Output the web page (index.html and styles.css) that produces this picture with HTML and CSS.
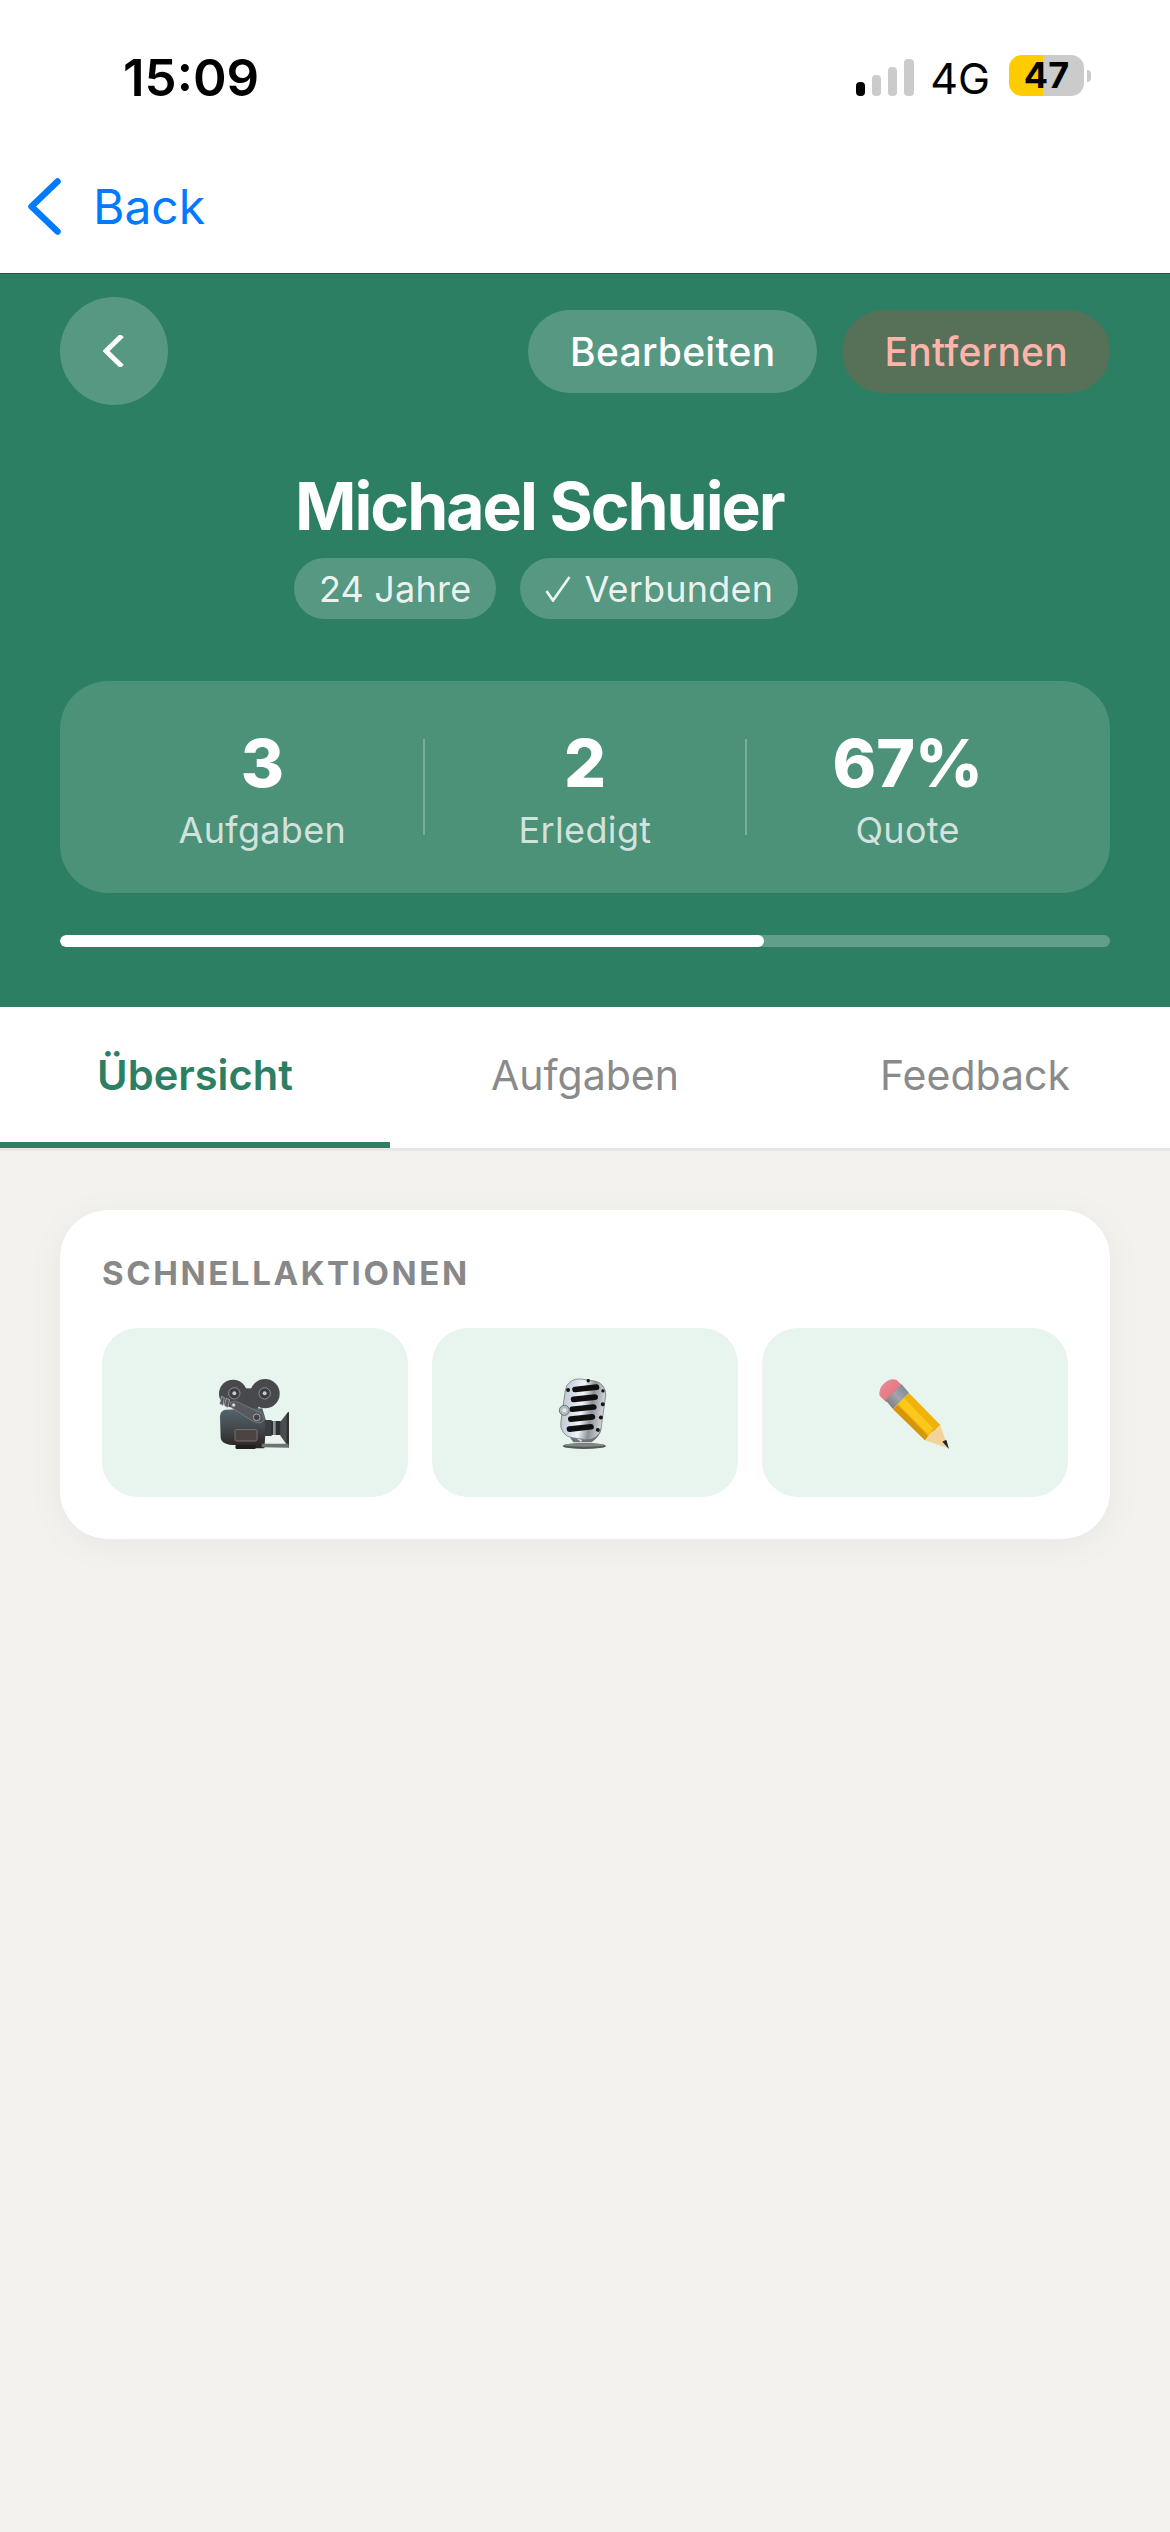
FILE: index.html
```html
<!DOCTYPE html>
<html lang="de">
<head>
<meta charset="utf-8">
<title>Michael Schuier</title>
<link rel="stylesheet" href="styles.css">
</head>
<body>
<div class="app">
  <header class="topbar">
    <div class="status">
      <span class="time">15:09</span>
      <div class="status-right">
        <div class="signal"><i class="bar b1 on"></i><i class="bar b2"></i><i class="bar b3"></i><i class="bar b4"></i></div>
        <span class="net">4G</span>
        <div class="battery"><span class="batt-body">47</span><i class="batt-nub"></i></div>
      </div>
    </div>
    <div class="nav">
      <svg class="nav-chev" width="33" height="57" viewBox="0 0 33 57"><path d="M29.5 3.5 3.5 28.5 29.5 53.5" fill="none" stroke="#007aff" stroke-width="6.5" stroke-linecap="round" stroke-linejoin="round"/></svg>
      <span class="nav-back">Back</span>
    </div>
  </header>

  <section class="hero">
    <div class="hero-top">
      <div class="round-btn"><svg width="21" height="32" viewBox="0 0 21 32"><path d="M19 0.5 3 16 19 31.5" fill="none" stroke="#fff" stroke-width="5"/></svg></div>
      <div class="hero-actions">
        <span class="action">Bearbeiten</span>
        <span class="action danger">Entfernen</span>
      </div>
    </div>
    <div class="person">
      <h1 class="name">Michael Schuier</h1>
      <div class="tags">
        <span class="tag tag-age">24 Jahre</span>
        <span class="tag tag-conn"><svg class="tag-check" width="26" height="26" viewBox="0 0 26 26"><path d="M1.5 15 8 24.5 24.5 1" fill="none" stroke="#eef5f2" stroke-width="2.6"/></svg>Verbunden</span>
      </div>
    </div>
    <div class="stats">
      <div class="stat"><div class="stat-num">3</div><div class="stat-label">Aufgaben</div></div>
      <i class="stat-sep"></i>
      <div class="stat"><div class="stat-num">2</div><div class="stat-label">Erledigt</div></div>
      <i class="stat-sep"></i>
      <div class="stat"><div class="stat-num">67%</div><div class="stat-label">Quote</div></div>
    </div>
    <div class="progress"><div class="progress-fill" style="width:67%"></div></div>
  </section>

  <nav class="tabs">
    <span class="tab active">Übersicht</span>
    <span class="tab">Aufgaben</span>
    <span class="tab">Feedback</span>
  </nav>

  <main class="content">
    <section class="card">
      <h2 class="card-title">SCHNELLAKTIONEN</h2>
      <div class="quick">
        <div class="tile">
          <svg width="100" height="95" viewBox="0 0 300 285">
            <defs>
              <linearGradient id="camBody" x1="0" y1="0" x2="0" y2="1"><stop offset="0" stop-color="#56666e"/><stop offset=".5" stop-color="#43484c"/><stop offset="1" stop-color="#2c2120"/></linearGradient>
            </defs>
            <circle cx="84" cy="86" r="42" fill="#47494c"/>
            <circle cx="180" cy="86" r="44" fill="#47494c"/>
            <rect x="100" y="70" width="60" height="62" fill="#47494c"/>
            <circle cx="88" cy="85" r="17" fill="#3b3d40" stroke="#8d9094" stroke-width="3"/>
            <circle cx="88" cy="85" r="6" fill="#c7c9cb"/>
            <circle cx="179" cy="85" r="17" fill="#3b3d40" stroke="#8d9094" stroke-width="3"/>
            <circle cx="179" cy="85" r="6" fill="#c7c9cb"/>
            <path d="M92 250 178 250 184 170 172 130 60 134Q45 138 45 155L47 218Q50 240 92 240Z" fill="url(#camBody)"/>
            <rect x="90" y="194" width="66" height="34" rx="4" fill="#4a4342" stroke="#77726f" stroke-width="3"/>
            <path d="M50 94 58 98 54 122 44 116ZM64 100 74 104 68 128 58 122Z" fill="#55585b" stroke="#c3c5c7" stroke-width="2"/>
            <path d="M76 112 92 108 172 146 178 162Q172 178 152 172L138 165 80 128Z" fill="#565a5e" stroke="#84888b" stroke-width="2"/>
            <circle cx="86" cy="120" r="5" fill="#d3d5d6"/>
            <circle cx="155" cy="157" r="10" fill="#3f4245" stroke="#b9bbbd" stroke-width="2.5"/>
            <rect x="180" y="165" width="20" height="48" fill="#3a3c3f"/>
            <rect x="198" y="168" width="30" height="42" rx="3" fill="#2f3134"/>
            <rect x="204" y="168" width="8" height="42" fill="#8f9397"/>
            <path d="M226 170 250 140 252 248 226 212Z" fill="#4b4e51"/>
            <path d="M245 146 252 140 252 248 245 240Z" fill="#2f3033"/>
            <path d="M170 236 250 236 252 248 170 247Z" fill="#6f7172"/>
            <rect x="92" y="240" width="60" height="12" rx="3" fill="#231c1c"/>
          </svg>
        </div>
        <div class="tile">
          <svg width="100" height="95" viewBox="0 0 300 285">
            <defs>
              <linearGradient id="micMetal" x1="0" y1="0" x2="1" y2="0"><stop offset="0" stop-color="#c4cad1"/><stop offset=".2" stop-color="#d2dce8"/><stop offset=".45" stop-color="#f3f5f8"/><stop offset=".7" stop-color="#8d939a"/><stop offset="1" stop-color="#d3d6da"/></linearGradient>
            </defs>
            <ellipse cx="148" cy="243" rx="65" ry="9" fill="#55585b"/>
            <ellipse cx="148" cy="240" rx="60" ry="5" fill="#84878a"/>
            <path d="M108 170Q92 205 115 232L170 232Q196 214 200 190L170 205 150 226 128 210 120 170Z" fill="#6f7377"/>
            <path d="M116 196Q120 218 140 228" fill="none" stroke="#d8dbde" stroke-width="6"/>
            <g transform="rotate(8 145 130)">
              <rect x="84" y="44" width="122" height="178" rx="40" fill="url(#micMetal)" stroke="#6a6d71" stroke-width="2"/>
              <rect x="103" y="61" width="82" height="17" rx="8.5" fill="#0f0f0f" transform="rotate(-14 144 70)"/>
              <rect x="103" y="91" width="82" height="17" rx="8.5" fill="#0f0f0f" transform="rotate(-14 144 100)"/>
              <rect x="103" y="121" width="82" height="17" rx="8.5" fill="#0f0f0f" transform="rotate(-14 144 130)"/>
              <rect x="103" y="151" width="82" height="17" rx="8.5" fill="#0f0f0f" transform="rotate(-14 144 160)"/>
              <rect x="103" y="181" width="82" height="17" rx="8.5" fill="#0f0f0f" transform="rotate(-14 144 190)"/>
              <circle cx="196" cy="70" r="5" fill="#141414"/><circle cx="201" cy="110" r="6" fill="#141414"/><circle cx="201" cy="150" r="6" fill="#141414"/><circle cx="197" cy="188" r="6" fill="#141414"/>
              <circle cx="92" cy="82" r="6" fill="#141414"/><circle cx="148" cy="46" r="5" fill="#141414"/>
            </g>
            <circle cx="88" cy="136" r="15" fill="#b7bcc1" stroke="#6c7075" stroke-width="3"/>
            <circle cx="88" cy="136" r="6" fill="#e6e9ec"/>
          </svg>
        </div>
        <div class="tile">
          <svg width="100" height="95" viewBox="0 0 300 285">
            <defs>
              <linearGradient id="eraser" x1="0" y1="0" x2="1" y2="1"><stop offset="0" stop-color="#ee8f99"/><stop offset="1" stop-color="#d96a76"/></linearGradient>
              <linearGradient id="ferrule" x1="0" y1="1" x2="1" y2="0"><stop offset="0" stop-color="#6d7176"/><stop offset=".5" stop-color="#a1a5a9"/><stop offset="1" stop-color="#6f8090"/></linearGradient>
            </defs>
            <path d="M64 112 44 92Q40 72 56 56 74 38 94 44L114 64Z" fill="url(#eraser)"/>
            <path d="M62 106 110 58 132 84 84 132Z" fill="url(#ferrule)"/>
            <path d="M84 132 132 84 226 180 180 226Z" fill="#f0b30a"/>
            <path d="M100 118 118 100 204 190 190 208Z" fill="#fbc91a"/>
            <path d="M84 132 98 120 190 214 180 226Z" fill="#d6950a"/>
            <path d="M180 226 196 204 218 192 226 180 250 250Z" fill="#f2d49a"/>
            <path d="M232 230 244 224 252 252Z" fill="#22262c"/>
          </svg>
        </div>
      </div>
    </section>
  </main>
</div>
</body>
</html>
```
FILE: styles.css
```css
* { box-sizing: border-box; }
html, body { margin: 0; padding: 0; }
body { font-family: Inter, "Liberation Sans", sans-serif; background: #f3f2ee; }
.app { width: 1170px; height: 2532px; overflow: hidden; display: flex; flex-direction: column; }

.topbar { background: #fff; height: 274px; border-bottom: 1px solid #2a5446; }
.status { height: 150px; display: flex; justify-content: space-between; padding: 46px 79px 0 123px; }
.time { font-size: 51px; font-weight: 600; line-height: 64px; color: #000; }
.status-right { display: flex; align-items: flex-start; padding-top: 11px; }
.signal { display: flex; gap: 7px; align-items: flex-end; height: 37px; margin-top: 2px; margin-right: 16px; }
.bar { display: block; width: 9px; border-radius: 4px; background: #cbcbcb; }
.b1 { height: 14px; } .b2 { height: 21px; } .b3 { height: 29px; } .b4 { height: 37px; width: 10px; }
.bar.on { background: #000; }
.net { font-size: 43px; line-height: 44px; font-weight: 400; color: #000; margin-right: 19px; margin-top: -1px; }
.battery { display: flex; align-items: center; margin-top: -2px; }
.batt-body { width: 75px; height: 41px; border-radius: 13px; background: linear-gradient(90deg, #ffcc00 0 46%, #cbcbcb 46% 100%); font-size: 36px; font-weight: 700; line-height: 41px; text-align: center; color: #000; }
.batt-nub { display: block; width: 4px; height: 12px; margin-left: 3px; background: #cbcbcb; border-radius: 0 6px 6px 0; }

.nav { display: flex; align-items: center; padding-left: 28px; height: 123px; margin-top: -5px; }
.nav-chev { display: block; margin-right: 32px; }
.nav-back { font-size: 48px; font-weight: 400; color: #007aff; line-height: 60px; }

.hero { background: #2c7f62; padding: 23px 60px 60px; }
.hero-top { display: flex; justify-content: space-between; align-items: center; }
.round-btn { width: 108px; height: 108px; border-radius: 50%; background: rgba(255,255,255,.2); display: flex; align-items: center; justify-content: center; }
.round-btn svg { display: block; margin-left: -1px; }
.hero-actions { display: flex; gap: 25px; }
.action { display: block; height: 83px; line-height: 83px; padding: 0 42px; border-radius: 42px; background: rgba(255,255,255,.2); color: #fff; font-size: 39px; font-weight: 500; letter-spacing: .25px; }
.action.danger { background: rgba(255,59,48,.2); color: #ffb3ab; }

.person { margin: 62px 0 0 234px; }
.name { margin: 0 0 13px 1px; font-size: 66px; line-height: 78px; font-weight: 700; letter-spacing: -2px; color: #fff; }
.tags { display: flex; gap: 24px; }
.tag { display: flex; align-items: center; height: 61px; padding: 0 25px; border-radius: 31px; background: rgba(255,255,255,.2); color: rgba(255,255,255,.9); font-size: 36px; letter-spacing: .2px; }
.tag-check { display: block; margin-right: 13px; }

.stats { display: flex; margin-top: 62px; background: rgba(255,255,255,.15); border-radius: 48px; padding: 43px 42px 41px; }
.stat { flex: 1; text-align: center; }
.stat-num { font-size: 66px; line-height: 78px; font-weight: 800; color: #fff; }
.stat-label { margin-top: 6px; font-size: 36px; line-height: 44px; letter-spacing: .35px; color: rgba(255,255,255,.75); }
.stat-sep { display: block; width: 2px; height: 96px; margin-top: 15px; background: rgba(255,255,255,.25); }

.progress { margin-top: 42px; height: 12px; border-radius: 6px; background: rgba(255,255,255,.25); overflow: hidden; }
.progress-fill { height: 100%; border-radius: 6px; background: #fff; }

.tabs { display: flex; background: #fff; border-bottom: 3px solid #e8e6e2; }
.tab { flex: 1; height: 141px; padding-top: 38px; line-height: 60px; text-align: center; font-size: 41px; font-weight: 400; color: #8a8a8a; border-bottom: 6px solid transparent; }
.tab.active { color: #2c7f62; font-weight: 600; font-size: 41.6px; border-bottom-color: #2c7f62; }

.content { flex: 1; padding: 59px 60px; background: #f3f2ee; }
.card { background: #fff; border-radius: 48px; padding: 43px 42px 42px; box-shadow: 0 6px 36px rgba(0,0,0,.05); }
.card-title { margin: 0 0 35px; font-size: 33px; line-height: 40px; font-weight: 700; letter-spacing: 2.6px; color: #888; }
.quick { display: grid; grid-template-columns: repeat(3, 1fr); gap: 24px; }
.tile { height: 169px; border-radius: 36px; background: #e8f4ee; display: flex; align-items: center; justify-content: center; }
.tile svg { display: block; }
```
